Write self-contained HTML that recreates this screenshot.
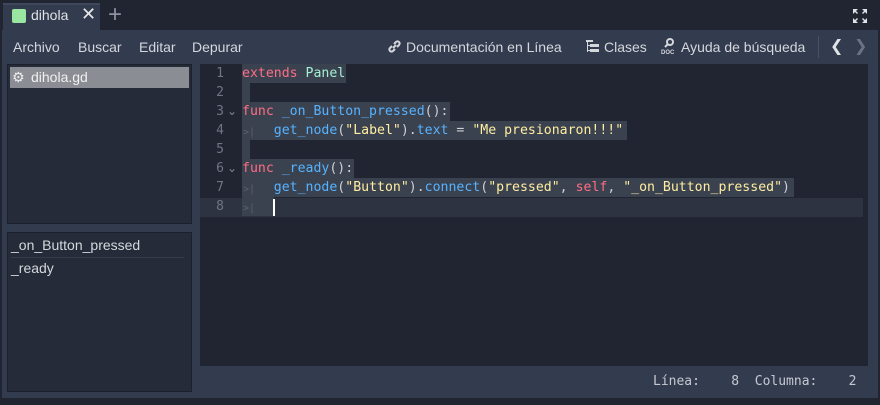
<!DOCTYPE html>
<html><head><meta charset="utf-8"><style>
*{margin:0;padding:0;box-sizing:border-box}
body{width:880px;height:405px;background:#202531;position:relative;overflow:hidden;font-family:"Liberation Sans","DejaVu Sans",sans-serif;color:#cdd0d6;font-size:14px}
.a{position:absolute}
.main{left:2px;top:30px;width:876px;height:368px;background:#333b4f}
.tab{left:3px;top:3px;width:97px;height:28px;background:#333b4f;border-top:2px solid #3f475c}
.menu span{position:absolute;top:39px;font-size:14px;color:#d4d7dc;white-space:nowrap}
.box{background:#252b39;border:1px solid #1b202b}
.code{left:200px;top:64px;width:668px;height:302px;background:#202531}
.ln{position:absolute;left:200px;width:24px;text-align:right;font-family:"DejaVu Sans Mono","Liberation Mono",monospace;font-size:13px;color:#6e7583}
.sel{position:absolute;background:#3a414f}
.t{position:absolute;left:242px;font-family:"DejaVu Sans Mono","Liberation Mono",monospace;font-size:13.2px;white-space:pre;color:#cdd0d6}
.k{color:#ff6e85}.f{color:#57b3ff}.s{color:#ffeda1}.c{color:#a3f0d4}
.tabi{position:absolute;left:243px;color:#5a6272;font-size:10px;font-family:"DejaVu Sans Mono",monospace}
.fold{position:absolute;left:227px;color:#7d8594;font-size:12px}
</style></head><body>
<div class="a tab"></div>
<div class="a" style="left:12px;top:9px;width:14px;height:14px;background:#98e6a0;border-radius:2px"></div>
<div class="a" style="left:31px;top:7px;font-size:14px;color:#e0e2e6">dihola</div>
<div class="a" style="left:81px;top:4px;font-size:18px;color:#e8e8e8">✕</div>
<div class="a" style="left:108px;top:1px;font-size:24px;color:#8c92a0;font-weight:300">+</div>
<svg class="a" style="left:853px;top:9px" width="14" height="14" viewBox="0 0 14 14" fill="#e0e2e6"><path d="M0 0h5l-2 2 2 2-1 1-2-2-2 2zM14 0v5l-2-2-2 2-1-1 2-2-2-2zM0 14v-5l2 2 2-2 1 1-2 2 2 2zM14 14h-5l2-2-2-2 1-1 2 2 2-2z"/></svg>
<div class="a main"></div>
<div class="menu">
<span style="left:13px">Archivo</span><span style="left:78px">Buscar</span><span style="left:139px">Editar</span><span style="left:192px">Depurar</span>
<span style="left:406px">Documentación en Línea</span><span style="left:604px">Clases</span><span style="left:681px">Ayuda de búsqueda</span>
</div>
<svg class="a" style="left:387px;top:39px" width="15" height="15" viewBox="0 0 15 15" fill="none" stroke="#d4d7dc" stroke-width="2"><path d="M6 9l3-3M5 7l-2 2a2 2 0 003 3l2-2M10 8l2-2a2 2 0 00-3-3L7 5"/></svg>
<svg class="a" style="left:585px;top:39px" width="15" height="15" viewBox="0 0 15 15" fill="#d4d7dc"><rect x="1" y="1" width="7" height="2"/><rect x="2" y="3" width="1" height="10"/><rect x="5" y="5" width="9" height="3"/><rect x="5" y="10" width="9" height="3"/><rect x="3" y="6" width="2" height="1"/><rect x="3" y="11" width="2" height="1"/></svg>
<svg class="a" style="left:661px;top:37px" width="16" height="18" viewBox="0 0 16 18"><circle cx="9" cy="5" r="3" fill="none" stroke="#d4d7dc" stroke-width="2"/><path d="M7 7l-3 3" stroke="#d4d7dc" stroke-width="2"/><text x="0" y="17" font-size="6" font-weight="bold" fill="#d4d7dc" font-family="Liberation Sans">DOC</text></svg>
<div class="a" style="left:818px;top:36px;width:1px;height:22px;background:#4a5266"></div>
<div class="a" style="left:830px;top:36px;font-size:16px;color:#e0e2e6">&#x276E;</div>
<div class="a" style="left:854px;top:36px;font-size:16px;color:#6a7283">&#x276F;</div>
<div class="a box" style="left:7px;top:64px;width:185px;height:160px"></div>
<div class="a" style="left:10px;top:67px;width:179px;height:21px;background:#8a8d93"></div>
<div class="a" style="left:12px;top:69px;font-size:14px;color:#eee">⚙</div>
<div class="a" style="left:31px;top:69px;font-size:14px;color:#f0f0f0">dihola.gd</div>
<div class="a box" style="left:7px;top:232px;width:185px;height:160px"></div>
<div class="a" style="left:11px;top:237px;font-size:14px;color:#d4d7dc">_on_Button_pressed</div>
<div class="a" style="left:11px;top:257px;width:173px;height:1px;background:#333b4c"></div>
<div class="a" style="left:11px;top:260px;font-size:14px;color:#d4d7dc">_ready</div>
<div class="a code"></div>
<div class="a" style="left:200px;top:198px;width:663px;height:19px;background:#2d3341"></div>
<div class="sel" style="left:242px;top:64px;width:104px;height:19px"></div>
<div class="sel" style="left:242px;top:83px;width:8px;height:19px"></div>
<div class="sel" style="left:242px;top:102px;width:208px;height:19px"></div>
<div class="sel" style="left:242px;top:121px;width:385px;height:19px"></div>
<div class="sel" style="left:242px;top:140px;width:8px;height:19px"></div>
<div class="sel" style="left:242px;top:159px;width:112px;height:19px"></div>
<div class="sel" style="left:242px;top:178px;width:552px;height:19px"></div>
<div class="sel" style="left:242px;top:197px;width:32px;height:19px"></div>
<div class="ln" style="top:66px">1</div><div class="ln" style="top:85px">2</div><div class="ln" style="top:104px">3</div><div class="ln" style="top:123px">4</div><div class="ln" style="top:142px">5</div><div class="ln" style="top:161px">6</div><div class="ln" style="top:180px">7</div><div class="ln" style="top:199px">8</div>
<div class="fold" style="top:104px">⌄</div><div class="fold" style="top:161px">⌄</div>
<div class="tabi" style="top:127px">&gt;|</div><div class="tabi" style="top:184px">&gt;|</div><div class="tabi" style="top:203px">&gt;|</div>
<div class="t" style="top:66px"><span class="k">extends</span> <span class="c">Panel</span></div>
<div class="t" style="top:104px"><span class="k">func</span> <span class="f">_on_Button_pressed</span>():</div>
<div class="t" style="top:123px">    <span class="f">get_node</span>(<span class="s">"Label"</span>).<span class="f">text</span> = <span class="s">"Me presionaron!!!"</span></div>
<div class="t" style="top:161px"><span class="k">func</span> <span class="f">_ready</span>():</div>
<div class="t" style="top:180px">    <span class="f">get_node</span>(<span class="s">"Button"</span>).<span class="f">connect</span>(<span class="s">"pressed"</span>, <span class="k">self</span>, <span class="s">"_on_Button_pressed"</span>)</div>
<div class="a" style="left:273px;top:199px;width:2px;height:17px;background:#fff"></div>
<div class="a" style="left:653px;top:374px;font-family:'DejaVu Sans Mono',monospace;font-size:13px;color:#c5c9d0;white-space:pre">Línea:    8  Columna:    2</div>
</body></html>
